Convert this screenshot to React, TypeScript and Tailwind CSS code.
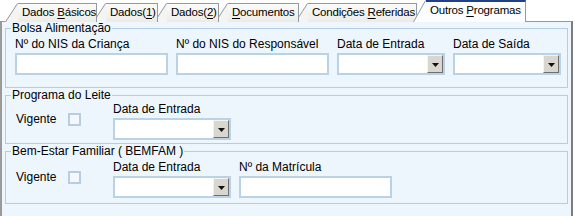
import React from "react";

type Tab = { pre: string; key: string; post: string; w: number; active?: boolean };

const tabs: Tab[] = [
  { pre: "Dados ", key: "B", post: "ásicos", w: 71 },
  { pre: "Dados(", key: "1", post: ")", w: 44 },
  { pre: "Dados(", key: "2", post: ")", w: 44 },
  { pre: "", key: "D", post: "ocumentos", w: 63 },
  { pre: "Condições ", key: "R", post: "eferidas", w: 101 },
  { pre: "Outros ", key: "P", post: "rogramas", w: 92, active: true },
];

function TabItem({ tab, index }: { tab: Tab; index: number }) {
  const h = tab.active ? 22 : 19;
  const z = tab.active ? 20 : 10 - index;
  return (
    <div className={`relative flex items-end ${index === 0 ? "" : "-ml-[4px]"}`} style={{ zIndex: z }}>
      <svg width="13" height={h} className="block shrink-0">
        <polygon points={`0,${h} 12,0 13,0 13,${h}`} fill={tab.active ? "#fcfdfe" : "#f4f4f2"} />
        <line x1="0.5" y1={h} x2="12.5" y2="0.5" stroke="#8f9aa3" strokeWidth="1" />
      </svg>
      <div
        className={`flex items-center border-t border-r border-[#8f9aa3] pr-[3px] ${
          tab.active
            ? "h-[22px] border-t-2 border-t-[#1f3f86] bg-[#fcfdfe] pl-[4px]"
            : "h-[19px] bg-gradient-to-b from-[#fbfbfa] to-[#ecebe6] pl-[4px]"
        }`}
      >
        <span
          className={`whitespace-nowrap text-[11.5px] tracking-[-0.2px] ${tab.active ? "pb-[2px]" : ""}`}
          style={{ width: tab.w }}
        >
          {tab.pre}
          <span className="underline underline-offset-2">{tab.key}</span>
          {tab.post}
        </span>
      </div>
    </div>
  );
}

function TextBox({ w }: { w: number }) {
  return <div className="h-[22px] border-2 border-[#b9d2e6] bg-white" style={{ width: w }} />;
}

function DateBox({ w }: { w: number }) {
  return (
    <div className="flex h-[22px] items-stretch border-2 border-[#b9d2e6] bg-white" style={{ width: w }}>
      <div className="flex-1" />
      <div className="flex w-[16px] items-center justify-center border border-t-[#f4f3ef] border-l-[#f4f3ef] border-r-[#6f6f6f] border-b-[#6f6f6f] bg-[#d9d6cf]">
        <svg width="7" height="4" viewBox="0 0 7 4" className="mt-[2px]">
          <polygon points="0,0 7,0 3.5,4" fill="#111" />
        </svg>
      </div>
    </div>
  );
}

function Field({ label, children }: { label: string; children: React.ReactNode }) {
  return (
    <div className="flex flex-col">
      <span className="h-[14px] leading-[14px]">{label}</span>
      <div className="mt-[2px]">{children}</div>
    </div>
  );
}

function Vigente() {
  return (
    <div className="mb-[12px] flex w-[98px] items-center self-end pl-[1px]">
      <span className="w-[52px]">Vigente</span>
      <div className="h-[13px] w-[13px] border-2 border-[#b8cde0] bg-[#f3f8fd]" />
    </div>
  );
}

export default function App() {
  return (
    <div className="h-[216px] w-[575px] overflow-hidden bg-white font-['Liberation_Sans',sans-serif] text-[12px] text-black">
      <div className="flex h-[22px] items-end pl-[5px]">
        {tabs.map((t, i) => (
          <TabItem key={i} tab={t} index={i} />
        ))}
      </div>
      <div className="-mt-px h-[195px] w-[573px] border-l-2 border-t border-r-2 border-l-[#9a9a9a] border-t-[#8f9aa3] border-r-[#7c7c7c] bg-[#eef6fd] pl-[3px] pr-[3px]">
        <fieldset className="border border-[#b4cde2] px-[5px] pb-[12px]">
          <legend className="px-[1px] leading-[13px]">Bolsa Alimentação</legend>
          <div className="mt-[2px] flex gap-[8px] pl-[4px]">
            <Field label="Nº do NIS da Criança">
              <TextBox w={153} />
            </Field>
            <Field label="Nº do NIS do Responsável">
              <TextBox w={153} />
            </Field>
            <Field label="Data de Entrada">
              <DateBox w={108} />
            </Field>
            <Field label="Data de Saída">
              <DateBox w={108} />
            </Field>
          </div>
        </fieldset>
        <fieldset className="mt-[1px] border border-[#b4cde2] px-[5px] pb-[3px]">
          <legend className="px-[1px] leading-[13px]">Programa do Leite</legend>
          <div className="flex pl-[4px]">
            <Vigente />
            <Field label="Data de Entrada">
              <DateBox w={118} />
            </Field>
          </div>
        </fieldset>
        <fieldset className="mt-[1px] border border-[#b4cde2] px-[5px] pb-[5px]">
          <legend className="px-[1px] leading-[13px]">Bem-Estar Familiar ( BEMFAM )</legend>
          <div className="mt-[2px] flex gap-[8px] pl-[4px]">
            <div className="-mr-[8px] flex">
              <Vigente />
            </div>
            <Field label="Data de Entrada">
              <DateBox w={118} />
            </Field>
            <Field label="Nº da Matrícula">
              <TextBox w={153} />
            </Field>
          </div>
        </fieldset>
      </div>
    </div>
  );
}
